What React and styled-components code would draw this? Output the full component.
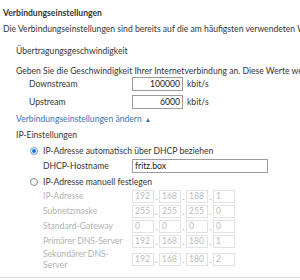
import styled, { createGlobalStyle } from "styled-components";

const GlobalStyle = createGlobalStyle`
  html, body {
    margin: 0;
    padding: 0;
    background: #fff;
    overflow: hidden;
  }
  body {
    font-family: Lato, "Open Sans", sans-serif;
    font-size: 8.6px;
    color: #363636;
  }
`;

const Page = styled.div`
  width: 300px;
  height: 278px;
  border-bottom: 1px solid #dcdcdc;
  padding-left: 3px;
  box-sizing: border-box;
  white-space: nowrap;
  overflow: hidden;
`;

const Title = styled.h2`
  margin: 6px 0 0;
  font-size: 8.6px;
  font-weight: 700;
  line-height: 14px;
`;

const Text = styled.p`
  margin: ${(p) => p.$mt || 0}px 0 0;
  line-height: 14px;
`;

const Section = styled.div`
  padding-left: 13px;
`;

const Link = styled.a`
  display: block;
  margin-top: 1px;
  line-height: 14px;
  color: #3f72b3;
  text-decoration: none;
  cursor: pointer;
`;

const Arrow = styled.span`
  display: inline-block;
  margin-left: 4px;
  width: 0;
  height: 0;
  border-left: 2.5px solid transparent;
  border-right: 2.5px solid transparent;
  border-bottom: 4px solid #3f72b3;
  vertical-align: 0;
`;

const FieldRow = styled.div`
  display: grid;
  grid-template-columns: ${(p) => p.$label}px max-content max-content;
  justify-content: start;
  align-items: center;
  height: ${(p) => p.$h || 18}px;
  margin-top: ${(p) => p.$mt || 0}px;
  padding-left: ${(p) => p.$indent}px;
  color: ${(p) => (p.$disabled ? "#b3b3b3" : "inherit")};
`;

const Label = styled.span`
  max-width: 80px;
  white-space: normal;
  line-height: 10.5px;
`;

const Field = styled.input`
  box-sizing: border-box;
  width: ${(p) => p.$w}px;
  height: 14px;
  margin: 0;
  padding: 0 2px;
  border: 1px solid #9c9c9c;
  border-radius: 0;
  font: inherit;
  color: #222;
  text-align: ${(p) => (p.$right ? "right" : "left")};
  outline: none;
  background: #fff;
`;

const Unit = styled.span`
  margin-left: 4px;
`;

const RadioRow = styled.label`
  display: flex;
  align-items: center;
  gap: 5px;
  height: 14px;
  margin-top: ${(p) => p.$mt || 0}px;
  padding-left: 14px;
`;

const Radio = styled.span`
  box-sizing: border-box;
  width: 8px;
  height: 8px;
  border-radius: 50%;
  border: 1px solid ${(p) => (p.$checked ? "#8fb6ea" : "#8a8a8a")};
  background: ${(p) => (p.$checked ? "#1f6fd8" : "#fff")};
  box-shadow: ${(p) => (p.$checked ? "inset 0 0 0 1px #fff" : "none")};
`;

const Octets = styled.div`
  display: flex;
  align-items: center;
`;

const Octet = styled.span`
  box-sizing: border-box;
  width: 22px;
  height: 13px;
  padding-left: 2px;
  border: 1px solid #e2e2e2;
  color: #bcbcbc;
  line-height: 11px;
`;

const Dot = styled.span`
  width: 5px;
  text-align: center;
  color: #9a9a9a;
`;

const ipRows = [
  ["IP-Adresse", ["192", "168", "188", "1"]],
  ["Subnetzmaske", ["255", "255", "255", "0"]],
  ["Standard-Gateway", ["0", "0", "0", "0"]],
  ["Primärer DNS-Server", ["192", "168", "180", "1"]],
  ["Sekundärer DNS-Server", ["192", "168", "180", "2"]],
];

function IpField({ values }) {
  return (
    <Octets>
      {values.map((v, i) => (
        <Octets key={i}>
          {i > 0 && <Dot>.</Dot>}
          <Octet>{v}</Octet>
        </Octets>
      ))}
    </Octets>
  );
}

export default function App() {
  return (
    <Page>
      <GlobalStyle />
      <Title>Verbindungseinstellungen</Title>
      <Text $mt={2}>
        Die Verbindungseinstellungen sind bereits auf die am häufigsten verwendeten Werte eingestellt.
      </Text>

      <Section>
        <Text $mt={8}>Übertragungsgeschwindigkeit</Text>
        <Text $mt={6}>
          Geben Sie die Geschwindigkeit Ihrer Internetverbindung an. Diese Werte werden benötigt.
        </Text>
        <FieldRow $label={103} $indent={13} $mt={-3}>
          <span>Downstream</span>
          <Field $w={51} $right defaultValue="100000" readOnly />
          <Unit>kbit/s</Unit>
        </FieldRow>
        <FieldRow $label={103} $indent={13}>
          <span>Upstream</span>
          <Field $w={51} $right defaultValue="6000" readOnly />
          <Unit>kbit/s</Unit>
        </FieldRow>

        <Link>
          Verbindungseinstellungen ändern
          <Arrow />
        </Link>
        <Text $mt={2}>IP-Einstellungen</Text>

        <RadioRow $mt={2}>
          <Radio $checked />
          IP-Adresse automatisch über DHCP beziehen
        </RadioRow>
        <FieldRow $label={89} $indent={27} $h={16}>
          <span>DHCP-Hostname</span>
          <Field $w={136} defaultValue="fritz.box" readOnly />
        </FieldRow>
        <RadioRow $mt={1}>
          <Radio />
          IP-Adresse manuell festlegen
        </RadioRow>

        {ipRows.map(([label, values], i) => (
          <FieldRow
            key={label}
            $label={89}
            $indent={27}
            $h={i === ipRows.length - 1 ? 21 : 15}
            $disabled
          >
            <Label>{label}</Label>
            <IpField values={values} />
          </FieldRow>
        ))}
      </Section>
    </Page>
  );
}
